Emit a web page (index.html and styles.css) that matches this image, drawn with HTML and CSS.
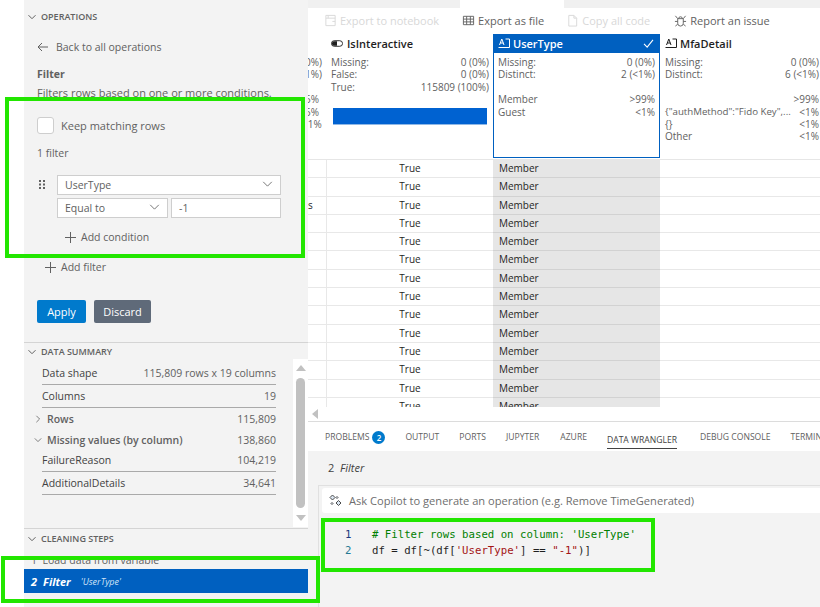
FILE: index.html
```html
<!DOCTYPE html>
<html lang="en">
<head>
<meta charset="utf-8">
<title>Data Wrangler</title>
<link rel="stylesheet" href="styles.css">
</head>
<body>
<div class="app">
  <div class="gutter"></div>
  <aside class="sidebar">
    <section class="ops">
      <h2 class="sec-title"><svg class="chev" viewBox="0 0 10 10"><path d="M1.5 3.2 5 6.7l3.5-3.5"/></svg>OPERATIONS</h2>
      <div class="back"><svg class="arrow" viewBox="0 0 12 10"><path d="M11 5H1.5M5 1 1 5l4 4"/></svg>Back to all operations</div>
      <div class="op-name">Filter</div>
      <div class="op-desc">Filters rows based on one or more conditions.</div>
      <label class="keep"><span class="check"></span>Keep matching rows</label>
      <div class="count">1 filter</div>
      <div class="filter">
        <svg class="grip" viewBox="0 0 6 9"><path d="M0 0h2v2H0zM4 0h2v2H4zM0 3.500h2v2H0zM4 3.500h2v2H4zM0 7h2v2H0zM4 7h2v2H4z"/></svg>
        <div class="fields">
          <div class="field wide">UserType<svg class="drop" viewBox="0 0 12 7"><path d="M1 1l5 5 5-5"/></svg></div>
          <div class="field-row">
            <div class="field op">Equal to<svg class="drop" viewBox="0 0 12 7"><path d="M1 1l5 5 5-5"/></svg></div>
            <div class="field val">-1</div>
          </div>
        </div>
      </div>
      <div class="add cond"><svg class="plus" viewBox="0 0 11 11"><path d="M5.500 0v11M0 5.500h11"/></svg>Add condition</div>
      <div class="add filt"><svg class="plus" viewBox="0 0 11 11"><path d="M5.500 0v11M0 5.500h11"/></svg>Add filter</div>
      <div class="actions"><button class="btn apply">Apply</button><button class="btn discard">Discard</button></div>
    </section>
    <section class="summary">
      <h2 class="sec-title"><svg class="chev" viewBox="0 0 10 10"><path d="M1.5 3.2 5 6.7l3.5-3.5"/></svg>DATA SUMMARY</h2>
      <div class="sum-body">
        <div class="sum-list">
          <div class="sum-row line"><span class="dark">Data shape</span><span>115,809 rows x 19 columns</span></div>
          <div class="sum-row line"><span class="dark">Columns</span><span>19</span></div>
          <div class="sum-row group"><svg class="tw" viewBox="0 0 10 10"><path d="M3 1l4 4-4 4"/></svg><b>Rows</b><span>115,809</span></div>
          <div class="sum-row group g2"><svg class="tw" viewBox="0 0 10 10"><path d="M1 3l4 4 4-4"/></svg><b>Missing values (by column)</b><span>138,860</span></div>
          <div class="sum-row line"><span class="dark">FailureReason</span><span>104,219</span></div>
          <div class="sum-row line"><span class="dark">AdditionalDetails</span><span>34,641</span></div>
        </div>
        <div class="vscroll">
          <span class="tri up"></span>
          <span class="thumb"></span>
          <span class="tri down"></span>
        </div>
      </div>
    </section>
    <section class="steps">
      <h2 class="sec-title"><svg class="chev" viewBox="0 0 10 10"><path d="M1.5 3.2 5 6.7l3.5-3.5"/></svg>CLEANING STEPS</h2>
      <div class="step-clip"><div class="step-old">1&nbsp;&nbsp;Load data from variable</div></div>
      <div class="step-on"><b>2</b><b>Filter</b><span>'UserType'</span></div>
    </section>
  </aside>
  <main class="main">
    <div class="tabstrip"><span class="tab"></span></div>
    <div class="toolbar">
      <span class="tool off t1"><svg class="ti" viewBox="0 0 14 14"><path d="M2 1.500h10v11H2zM2 4.500h10M4.500 1.500v3M9 8h3"/></svg>Export to notebook</span>
      <span class="tool t2"><svg class="ti" viewBox="0 0 14 14"><path d="M1.500 2.500h11v9h-11zM1.500 5.500h11M1.500 8.500h11M5 2.500v9M9 2.500v9"/></svg>Export as file</span>
      <span class="tool off t3"><svg class="ti" viewBox="0 0 14 14"><path d="M3 1.500h5.500l3 3v8.500H3zM8.500 1.500v3h3"/></svg>Copy all code</span>
      <span class="tool"><svg class="ti" viewBox="0 0 14 14"><path d="M4 5h6v5a3 3 0 0 1-6 0zM5 5a2 2 0 0 1 4 0M1.500 2l2.500 3M12.500 2 10 5M1 8h3M10 8h3M1.500 13 4 11M12.500 13 10 11"/></svg>Report an issue</span>
    </div>
    <div class="heads">
      <div class="col c0">
        <div class="hd"></div>
        <div class="stats">
          <p>0%)</p><p>1%)</p><p>&nbsp;</p><p>5%</p><p>5%</p><p>:1%</p>
        </div>
      </div>
      <div class="col c1">
        <div class="hd"><svg class="ci tog" viewBox="0 0 13 7"><rect x="0.500" y="0.500" width="12" height="6" rx="3"/><path class="fill" d="M3.500 1h3v5h-3a2.500 2.500 0 0 1 0-5z"/></svg>IsInteractive</div>
        <div class="stats">
          <p><span>Missing:</span><span>0 (0%)</span></p>
          <p><span>False:</span><span>0 (0%)</span></p>
          <p><span>True:</span><span>115809 (100%)</span></p>
          <div class="bar"></div>
        </div>
      </div>
      <div class="col c2">
        <div class="hd on"><svg class="ci txt" viewBox="0 0 12 11"><path d="M1.500 7 3.800 1 6 7M2.300 5h3M7.500 1h4v8.500H.5"/></svg>UserType<svg class="tick" viewBox="0 0 12 10"><path d="M1 5.500 4.500 9 11 1"/></svg></div>
        <div class="stats">
          <p><span>Missing:</span><span>0 (0%)</span></p>
          <p><span>Distinct:</span><span>2 (&lt;1%)</span></p>
          <p>&nbsp;</p>
          <p><span>Member</span><span>&gt;99%</span></p>
          <p><span>Guest</span><span>&lt;1%</span></p>
        </div>
      </div>
      <div class="col c3">
        <div class="hd"><svg class="ci txt" viewBox="0 0 12 11"><path d="M1.500 7 3.800 1 6 7M2.300 5h3M7.500 1h4v8.500H.5"/></svg>MfaDetail</div>
        <div class="stats">
          <p><span>Missing:</span><span>0 (0%)</span></p>
          <p><span>Distinct:</span><span>6 (&lt;1%)</span></p>
          <p>&nbsp;</p>
          <p><span></span><span>&gt;99%</span></p>
          <p><span class="long">{"authMethod":"Fido Key",...</span><span>&lt;1%</span></p>
          <p><span>{}</span><span>&lt;1%</span></p>
          <p><span>Other</span><span>&lt;1%</span></p>
        </div>
      </div>
    </div>
    <div class="grid">
      <div class="row"><i></i><em>True</em><u>Member</u></div>
      <div class="row"><i></i><em>True</em><u>Member</u></div>
      <div class="row"><i>s</i><em>True</em><u>Member</u></div>
      <div class="row"><i></i><em>True</em><u>Member</u></div>
      <div class="row"><i></i><em>True</em><u>Member</u></div>
      <div class="row"><i></i><em>True</em><u>Member</u></div>
      <div class="row"><i></i><em>True</em><u>Member</u></div>
      <div class="row"><i></i><em>True</em><u>Member</u></div>
      <div class="row"><i></i><em>True</em><u>Member</u></div>
      <div class="row"><i></i><em>True</em><u>Member</u></div>
      <div class="row"><i></i><em>True</em><u>Member</u></div>
      <div class="row"><i></i><em>True</em><u>Member</u></div>
      <div class="row"><i></i><em>True</em><u>Member</u></div>
      <div class="row"><i></i><em>True</em><u>Member</u></div>
    </div>
    <div class="hscroll"><span class="tri left"></span></div>
    <nav class="tabs">
      <span class="pt">PROBLEMS<b class="badge">2</b></span>
      <span class="pt">OUTPUT</span>
      <span class="pt">PORTS</span>
      <span class="pt">JUPYTER</span>
      <span class="pt azure">AZURE</span>
      <span class="pt active">DATA WRANGLER</span>
      <span class="pt">DEBUG CONSOLE</span>
      <span class="pt">TERMINAL</span>
    </nav>
    <div class="panel">
      <div class="crumb">2&nbsp;&nbsp;<em>Filter</em></div>
      <div class="editor">
        <div class="ask"><svg class="spark" viewBox="0 0 13 13"><path d="M3.500 1 6 3.500 3.500 6 1 3.500zM9.500 6.500 12 9 9.500 11.500 7 9zM8 2.500l1 1-1 1-1-1zM3 8.500l1 1-1 1-1-1z"/></svg>Ask Copilot to generate an operation (e.g. Remove TimeGenerated)</div>
        <div class="code">
          <div class="ln"><span class="no n1">1</span><span class="cm"># Filter rows based on column: 'UserType'</span></div>
          <div class="ln"><span class="no n2">2</span><span>df = df[~(df[<span class="str">'UserType'</span>] == <span class="str">"-1"</span>)]</span></div>
        </div>
      </div>
    </div>
  </main>
</div>
<div class="mark m1"></div>
<div class="mark m2"></div>
<div class="mark m3"></div>
</body>
</html>
```
FILE: styles.css
```css
* { box-sizing: border-box; }
html, body { margin: 0; height: 100%; }
body { background: #fff; font-family: "Open Sans", "Noto Sans", sans-serif; font-size: 11px; color: #616161; overflow: hidden; }
.app { display: flex; width: 820px; height: 607px; overflow: hidden; }
.gutter { width: 24px; flex: none; background: #fff; }

/* sidebar */
.sidebar { width: 284px; flex: none; background: #f3f3f3; display: flex; flex-direction: column; overflow: hidden; }
.sec-title { margin: 0; display: flex; align-items: center; font-size: 9px; font-weight: 600; line-height: 14px; color: #616161; height: 14px; }
.chev { width: 10px; height: 10px; margin: 0 4px 0 3px; fill: none; stroke: #616161; stroke-width: 1; }
.ops { height: 342px; padding-top: 10px; flex: none; }
.back { display: flex; align-items: center; margin: 16px 0 0 13px; height: 14px; font-size: 10.500px; }
.arrow { width: 12px; height: 10px; margin-right: 7px; fill: none; stroke: #616161; stroke-width: 1; }
.op-name { margin: 13px 0 0 13px; font-weight: 700; font-size: 10.500px; line-height: 14px; }
.op-desc { margin: 5px 0 0 13px; font-size: 11px; line-height: 14px; white-space: nowrap; }
.keep { display: flex; align-items: center; margin: 17px 0 0 13px; font-size: 11px; height: 17px; }
.check { width: 17px; height: 17px; background: #fff; border: 1px solid #cecece; border-radius: 3px; margin-right: 7px; }
.count { margin: 12px 0 0 13px; font-size: 10.500px; line-height: 14px; }
.filter { display: flex; margin: 15px 0 0 15px; }
.grip { width: 6px; height: 9px; margin: 5px 12px 0 0; fill: #616161; }
.fields { display: flex; flex-direction: column; gap: 3px; width: 224px; }
.field { height: 20px; background: #fff; border: 1px solid #cecece; display: flex; align-items: center; justify-content: space-between; padding: 0 7px; font-size: 10.500px; }
.field-row { display: flex; gap: 3px; }
.op { width: 111px; }
.val { flex: 1; }
.drop { width: 11px; height: 6px; fill: none; stroke: #616161; stroke-width: 1; margin-bottom: 2px; }
.add { display: flex; align-items: center; height: 14px; font-size: 10.500px; }
.cond { margin: 12px 0 0 41px; }
.filt { margin: 16px 0 0 21px; }
.plus { width: 11px; height: 11px; margin-right: 5px; fill: none; stroke: #616161; stroke-width: 1; }
.actions { display: flex; gap: 8px; margin: 26px 0 0 13px; }
.btn { height: 23px; border: 0; border-radius: 2px; color: #fff; font: 400 11px "Open Sans", sans-serif; padding: 0; }
.apply { width: 49px; background: #007acc; }
.discard { width: 57px; background: #5f6a79; }

.summary { height: 186px; flex: none; border-top: 1px solid #d4d4d4; padding-top: 2px; display: flex; flex-direction: column; }
.sum-body { display: flex; flex: 1; }
.sum-list { width: 269px; flex: none; padding: 3px 17px 0 18px; }
.sum-row { display: flex; justify-content: space-between; align-items: center; height: 23px; font-size: 10.500px; }
.line { border-bottom: 1px solid #a9a9a9; }
.dark { color: #424242; }
.group { height: 22px; }
.g2 { height: 20px; margin-bottom: -1px; }
.group b { flex: 1; margin-left: 5px; font-weight: 600; }
.tw { width: 8px; height: 8px; margin-left: -8px; fill: none; stroke: #616161; stroke-width: 1; flex: none; }
.vscroll { width: 15px; flex: none; height: 168px; background: #fff; display: flex; flex-direction: column; align-items: center; padding: 6px 0; justify-content: space-between; }
.thumb { width: 9px; height: 130px; background: #c1c1c1; border-radius: 5px; }
.tri { display: block; width: 0; height: 0; border: 5px solid transparent; }
.tri.up { border-top: 0; border-bottom: 6px solid #c1c1c1; }
.tri.down { border-bottom: 0; border-top: 6px solid #c1c1c1; }

.steps { flex: 1; border-top: 1px solid #d4d4d4; padding-top: 3px; }
.step-clip { height: 23px; overflow: hidden; }
.step-old { padding: 7px 0 0 7px; font-size: 10.500px; line-height: 14px; }
.step-on { height: 24px; background: #0060c0; color: #fff; display: flex; align-items: center; padding-left: 7px; font-style: italic; white-space: nowrap; }
.step-on b { font-size: 11px; margin-right: 6px; }
.step-on span { font-size: 9px; margin-left: 4px; color: #cfe2f7; }

/* main */
.main { flex: 1; min-width: 0; display: flex; flex-direction: column; background: #fff; }
.tabstrip { height: 8px; background: #f0f0f0; flex: none; padding-left: 152px; }
.tab { display: block; width: 104px; height: 8px; background: #fff; }
.toolbar { height: 26px; flex: none; display: flex; align-items: center; padding: 0 0 2px 16px; font-size: 11px; white-space: nowrap; }
.tool { display: flex; align-items: center; }
.t1 { margin-right: 23px; }
.t2 { margin-right: 22px; }
.t3 { margin-right: 24px; }
.tool.off { color: #d8d8d8; }
.ti { width: 13px; height: 13px; margin-right: 3px; fill: none; stroke: currentColor; stroke-width: 1; }
.heads { display: flex; height: 124px; flex: none; }
.col { flex: none; }
.c0 { width: 19px; overflow: hidden; display: flex; flex-direction: column; align-items: flex-end; padding-right: 5px; }
.c0 .hd { padding: 0; }
.c0 p { justify-content: flex-end; }
.c1 { width: 166px; padding-right: 4px; }
.c2 { width: 167px; border: 1px solid #0060c0; border-top: 0; height: 124px; }
.c3 { width: 160px; }
.hd { height: 19px; display: flex; align-items: center; gap: 3px; font-size: 11px; font-weight: 600; color: #1f1f1f; white-space: nowrap; }
.hd.on { background: #0060c0; color: #fff; margin: 0 -1px; padding: 0 6px 0 5px; }
.c1 .hd { padding-left: 4px; gap: 4px; }
.c3 .hd { padding-left: 5px; }
.ci { width: 12px; height: 11px; fill: none; stroke: currentColor; stroke-width: 1; flex: none; }
.tog { height: 7px; }
.ci .fill { fill: currentColor; stroke: none; }
.tick { width: 11px; height: 9px; margin-left: auto; fill: none; stroke: #fff; stroke-width: 1.200; }
.stats { padding-top: 3px; font-size: 10px; }
.stats p { margin: 0; height: 12.400px; line-height: 12.400px; display: flex; justify-content: space-between; white-space: nowrap; }
.stats .long { font-size: 9.700px; }
.c1 .stats { padding-left: 4px; }
.c2 .stats { padding: 3px 4px 0; }
.c3 .stats { padding: 3px 1px 0 5px; }
.bar { height: 17px; margin: 15px 0 0 2px; width: 154px; background: #0062d1; border-bottom: 1px solid #8fb8e6; }

.grid { height: 248px; flex: none; overflow: hidden; border-top: 1px solid #e6e6e6; margin-top: 1px; }
.row { display: grid; grid-template-columns: 19px 166px 167px 1fr; height: 18.300px; border-bottom: 1px solid #e8e8e8; font-size: 10px; color: #1f1f1f; line-height: 17px; }
.row i { font-style: normal; border-right: 1px solid #e8e8e8; color: #1f1f1f; }
.row em { font-style: normal; text-align: center; }
.row u { text-decoration: none; background: #e6e6e6; padding-left: 6px; box-shadow: 0 1px 0 #d2d2d2; }

.hscroll { height: 15px; flex: none; border-bottom: 1px solid #dcdcdc; padding: 2px 0 0 4px; }
.tri.left { border-left: 0; border-right: 6px solid #c1c1c1; }
.tabs { height: 29px; flex: none; display: flex; align-items: center; padding-left: 17px; gap: 20px; font-size: 8.600px; white-space: nowrap; overflow: hidden; }
.pt { display: flex; align-items: center; height: 29px; padding-top: 1px; }
.azure { margin-left: 1px; }
.pt.active { color: #424242; box-shadow: inset 0 -1px 0 #424242; height: 19px; margin-top: 5px; margin-right: 3px; }
.badge { display: inline-block; width: 13px; height: 13px; border-radius: 50%; background: #007acc; color: #fff; font-size: 8px; font-weight: 600; text-align: center; line-height: 13px; margin-left: 3px; }
.panel { flex: 1; background: #f3f3f3; padding-left: 20px; }
.crumb { padding: 9px 0 0; font-size: 11px; line-height: 15px; color: #424242; height: 34px; }
.crumb em { font-style: italic; }
.editor { border: 1px solid #e0e0e0; border-width: 1px 0 0 1px; margin-left: -10px; height: 130px; padding: 2px 0 0 3px; }
.ask { height: 25px; background: #fff; display: flex; align-items: center; padding-left: 7px; font-size: 11.100px; color: #6e6e6e; border-radius: 3px 0 0 3px; white-space: nowrap; }
.spark { width: 13px; height: 13px; margin-right: 7px; fill: #dbe6f2; stroke: #4a4a4a; stroke-width: 1; }
.code { padding: 14px 0 0 23px; font-family: "DejaVu Sans Mono", "Liberation Mono", monospace; font-size: 10.700px; color: #1f1f1f; }
.ln { height: 16px; line-height: 16px; display: flex; white-space: pre; }
.no { width: 27px; flex: none; }
.n1 { color: #1a3a80; }
.n2 { color: #237893; }
.cm { color: #008000; }
.str { color: #a31515; }

/* annotation rectangles drawn over the screenshot */
.mark { position: absolute; border: 4px solid #22e600; pointer-events: none; }
.m1 { left: 5px; top: 97px; width: 300px; height: 161px; }
.m2 { left: 1px; top: 556px; width: 319px; height: 47px; }
.m3 { left: 321px; top: 518px; width: 334px; height: 54px; }
```
